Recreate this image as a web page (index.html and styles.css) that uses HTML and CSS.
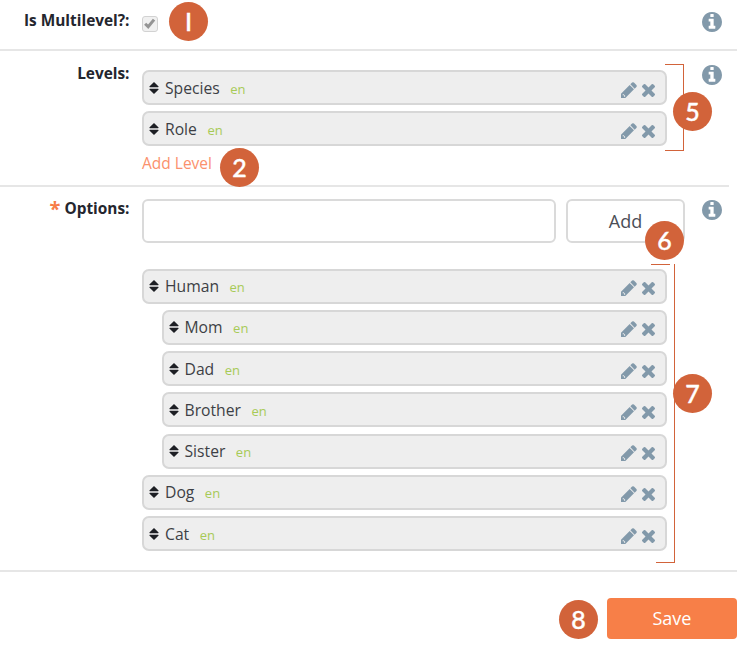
FILE: index.html
```html
<!DOCTYPE html>
<html lang="en">
<head>
<meta charset="utf-8">
<title>Options</title>
<link rel="stylesheet" href="styles.css">
</head>
<body>
<svg class="sprite" aria-hidden="true">
  <symbol id="info" viewBox="0 128 1536 1536"><path d="M1024 1376v-160q0-14-9-23t-23-9h-96v-512q0-14-9-23t-23-9h-320q-14 0-23 9t-9 23v160q0 14 9 23t23 9h96v320h-96q-14 0-23 9t-9 23v160q0 14 9 23t23 9h448q14 0 23-9t9-23zm-128-896v-160q0-14-9-23t-23-9h-192q-14 0-23 9t-9 23v160q0 14 9 23t23 9h192q14 0 23-9t9-23zm640 416q0 209-103 385.5t-279.5 279.5-385.5 103-385.5-103-279.5-279.5-103-385.5 103-385.5 279.5-279.5 385.5-103 385.5 103 279.5 279.5 103 385.5z"/></symbol>
  <symbol id="pencil" viewBox="0 128 1536 1536"><path d="M363 1536l61-61-205-205-61 61v77h128v128h77zM832 416l416 416-832 832h-416v-416zm683 96q0 53-37 90l-166 166-416-416 166-165q36-38 90-38 53 0 91 38l235 234q37 39 37 91z"/></symbol>
  <symbol id="times" viewBox="110 366 1188 1188"><path d="M1298 1322q0 40-28 68l-136 136q-28 28-68 28t-68-28l-294-294-294 294q-28 28-68 28t-68-28l-136-136q-28-28-28-68t28-68l294-294-294-294q-28-28-28-68t28-68l136-136q28-28 68-28t68 28l294 294 294-294q28-28 68-28t68 28l136 136q28 28 28 68t-28 68l-294 294 294 294q28 28 28 68z"/></symbol>
  <symbol id="sort" viewBox="0 0 10 12"><path d="M5 0L9.6 4.4Q9.8 5.2 9 5.2H1Q.2 5.2 .4 4.4ZM5 12L9.6 7.6Q9.8 6.8 9 6.8H1Q.2 6.8 .4 7.6Z"/></symbol>
</svg>
<form class="form">
  <section class="row multilevel">
    <label class="label">Is Multilevel?:</label>
    <div class="field">
      <span class="checkbox"><svg viewBox="0 0 12 12"><path d="M2 6.2L4.8 9L10.2 2.4"/></svg></span>
      <span class="badge b1">I</span>
    </div>
    <svg class="info"><use href="#info"/></svg>
  </section>

  <section class="row levels">
    <label class="label">Levels:</label>
    <div class="field">
      <ul class="list">
        <li class="item"><svg class="sort"><use href="#sort"/></svg><span class="name">Species</span><span class="lang">en</span><svg class="edit"><use href="#pencil"/></svg><svg class="remove"><use href="#times"/></svg></li>
        <li class="item"><svg class="sort"><use href="#sort"/></svg><span class="name">Role</span><span class="lang">en</span><svg class="edit"><use href="#pencil"/></svg><svg class="remove"><use href="#times"/></svg></li>
      </ul>
      <a class="add-level">Add Level</a>
      <span class="badge b2">2</span>
      <span class="bracket levels-bracket"></span>
      <span class="badge b5">5</span>
    </div>
    <svg class="info"><use href="#info"/></svg>
  </section>

  <section class="row options">
    <label class="label"><span class="required">*</span> Options:</label>
    <div class="field">
      <div class="entry">
        <input class="input" type="text">
        <button class="add" type="button">Add</button>
      </div>
      <ul class="list">
        <li class="item"><svg class="sort"><use href="#sort"/></svg><span class="name">Human</span><span class="lang">en</span><svg class="edit"><use href="#pencil"/></svg><svg class="remove"><use href="#times"/></svg></li>
        <li class="item child"><svg class="sort"><use href="#sort"/></svg><span class="name">Mom</span><span class="lang">en</span><svg class="edit"><use href="#pencil"/></svg><svg class="remove"><use href="#times"/></svg></li>
        <li class="item child"><svg class="sort"><use href="#sort"/></svg><span class="name">Dad</span><span class="lang">en</span><svg class="edit"><use href="#pencil"/></svg><svg class="remove"><use href="#times"/></svg></li>
        <li class="item child"><svg class="sort"><use href="#sort"/></svg><span class="name">Brother</span><span class="lang">en</span><svg class="edit"><use href="#pencil"/></svg><svg class="remove"><use href="#times"/></svg></li>
        <li class="item child"><svg class="sort"><use href="#sort"/></svg><span class="name">Sister</span><span class="lang">en</span><svg class="edit"><use href="#pencil"/></svg><svg class="remove"><use href="#times"/></svg></li>
        <li class="item"><svg class="sort"><use href="#sort"/></svg><span class="name">Dog</span><span class="lang">en</span><svg class="edit"><use href="#pencil"/></svg><svg class="remove"><use href="#times"/></svg></li>
        <li class="item"><svg class="sort"><use href="#sort"/></svg><span class="name">Cat</span><span class="lang">en</span><svg class="edit"><use href="#pencil"/></svg><svg class="remove"><use href="#times"/></svg></li>
      </ul>
      <span class="badge b6">6</span>
      <span class="bracket-cap"></span>
      <span class="bracket options-bracket"></span>
      <span class="badge b7">7</span>
    </div>
    <svg class="info"><use href="#info"/></svg>
  </section>

  <footer class="actions">
    <span class="badge b8">8</span>
    <button class="save" type="button">Save</button>
  </footer>
</form>
</body>
</html>
```
FILE: styles.css
```css
* { box-sizing: border-box; }
body {
  margin: 0;
  background: #fff;
  color: #3d3f45;
  font: 16px/20px "Open Sans", sans-serif;
  overflow: hidden;
}
.sprite { position: absolute; width: 0; height: 0; }
.form { width: 737px; }
.row {
  display: grid;
  grid-template-columns: 129.5px 525px 20px;
  column-gap: 12.5px;
  border-bottom: 2px solid #e6e6e6;
}
.row .info { margin-left: 22.5px; }
.multilevel { height: 51px; padding-top: 11px; }
.levels { width: 729px; height: 136px; padding-top: 19px; border-bottom-color: #e6e6e6; }
.options { height: 385px; padding-top: 12px; }
.label {
  text-align: right;
  font-size: 15.4px;
  font-weight: 700;
  color: #24262e;
  white-space: nowrap;
}
.levels .label { margin-top: -6px; }
.required { color: #f77d48; font-size: 20px; line-height: 10px; vertical-align: -2px; }
.field { position: relative; }
.info { width: 20px; height: 20px; fill: #8299aa; }
.levels .info { margin-top: -5px; }
.options .info { margin-top: 1px; }
.multilevel .info { margin-top: 1px; }
.checkbox {
  display: block;
  width: 16px;
  height: 16px;
  margin-top: 4.5px;
  border: 1.5px solid #d2d2d2;
  border-radius: 3px;
  background: #f0f0f0;
}
.checkbox svg { display: block; width: 13px; height: 13px; fill: none; stroke: #949494; stroke-width: 2.8; }
.list { display: grid; row-gap: 6.3px; margin: 0; padding: 0; list-style: none; }
.item {
  display: flex;
  align-items: center;
  height: 35px;
  padding: 0 10px 0 5px;
  border: 2px solid #d7d7d7;
  border-radius: 7px;
  background: #eee;
}
.item.child { margin-left: 19.5px; }
.sort { width: 10px; height: 12px; margin-right: 6px; fill: #1d1f24; }
.name { font-size: 15.7px; }
.lang { margin: 2px 0 0 10.5px; color: #a7ca57; font-size: 13px; }
.edit { width: 16px; height: 16px; margin: 4px 5px 0 auto; fill: #8299aa; }
.remove { width: 13px; height: 13px; margin-top: 5px; fill: #8299aa; }
.add-level { display: block; margin-top: 6.5px; color: #fb916d; font-size: 15.5px; }
.entry { display: flex; gap: 10px; width: 543px; margin-bottom: 25.5px; }
.input, .add {
  height: 44px;
  border: 2px solid #dadada;
  border-radius: 6px;
  background: #fff;
}
.input { width: 414px; padding: 0 10px; }
.add { width: 119px; padding: 0; color: #4b4e56; font: 18px/24px "Open Sans", sans-serif; }
.actions { display: flex; justify-content: flex-end; align-items: flex-start; gap: 9px; padding-top: 26px; }
.save {
  width: 130px;
  height: 41px;
  padding: 0 0 2px;
  border: 0;
  border-radius: 4px;
  background: #f77f48;
  color: #fff;
  font: 18px/24px "Open Sans", sans-serif;
}
.badge {
  width: 39px;
  height: 39px;
  border-radius: 50%;
  background: #d2633a;
  color: #fff;
  text-align: center;
  font: 500 25px/39px Lato, sans-serif;
  -webkit-text-stroke: .4px #fff;
}
.field .badge { position: absolute; }
.b1 { left: 27px; top: -9px; }
.b2 { left: 78px; top: 78px; }
.b5 { left: 531px; top: 22px; }
.b6 { left: 503px; top: 22px; }
.b7 { left: 531px; top: 175px; }
.b8 { margin-top: 2px; }
.bracket { position: absolute; border: 1px solid #d2633a; border-left: 0; }
.levels-bracket { left: 523px; top: -6px; width: 19px; height: 87px; }
.options-bracket { left: 514px; top: 65px; width: 19px; height: 299px; border-top: 0; }
.bracket-cap { position: absolute; left: 509px; top: 65px; width: 19px; height: 1px; background: #d2633a; }
```
